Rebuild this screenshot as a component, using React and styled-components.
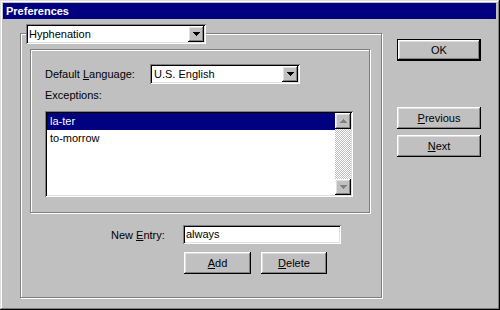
import React from "react";
import styled, { createGlobalStyle, css } from "styled-components";

const GlobalStyle = createGlobalStyle`
  html, body {
    margin: 0;
    padding: 0;
    background: #c0c0c0;
  }
  body {
    font-family: "Liberation Sans", Arial, sans-serif;
    font-size: 11px;
    color: #000;
  }
`;

// shared bevels
const raised = css`
  background: #c0c0c0;
  box-shadow: inset -1px -1px #000, inset 1px 1px #fff, inset -2px -2px #808080,
    inset 2px 2px #dfdfdf;
`;

const sunken = css`
  background: #fff;
  box-shadow: inset 1px 1px #808080, inset -1px -1px #fff, inset 2px 2px #000,
    inset -2px -2px #dfdfdf;
`;

const etched = css`
  border: 1px solid #808080;
  box-shadow: 1px 1px 0 #fff, inset 1px 1px 0 #fff;
`;

const Window = styled.div`
  box-sizing: border-box;
  width: 500px;
  height: 310px;
  padding: 3px 4px 3px 3px;
  background: #c0c0c0;
  box-shadow: inset -1px -1px #000, inset 1px 1px #dfdfdf, inset -2px -2px #808080,
    inset 2px 2px #fff;
  display: flex;
  flex-direction: column;
  overflow: hidden;
`;

const TitleBar = styled.div`
  height: 16px;
  background: #000080;
  color: #fff;
  font-weight: bold;
  font-size: 11px;
  line-height: 16px;
  padding-left: 3px;
`;

const Body = styled.div`
  display: flex;
  align-items: flex-start;
`;

const GroupBox = styled.div`
  ${etched};
  box-sizing: border-box;
  width: 362px;
  height: 265px;
  margin: 14px 0 0 17px;
`;

// combo box
const ComboField = styled.div`
  ${sunken};
  box-sizing: border-box;
  width: ${(p) => p.$width}px;
  height: 20px;
  padding: 2px;
  display: flex;
  align-items: center;
  margin: ${(p) => p.$margin || "0"};
`;

const ComboText = styled.span`
  flex: 1;
  padding-left: ${(p) => p.$indent || 1}px;
  white-space: nowrap;
`;

const ArrowButton = styled.div`
  ${raised};
  width: 16px;
  height: 16px;
  flex: none;
  display: flex;
  align-items: center;
  justify-content: center;
`;

const DownArrow = ({ color = "#000" }) => (
  <svg width="7" height="4" viewBox="0 0 7 4" shapeRendering="crispEdges">
    <path
      d="M0 0h7v1h-1v1h-1v1h-1v1h-1v-1h-1v-1h-1v-1h-1z"
      fill={color}
    />
  </svg>
);

const UpArrow = ({ color = "#000" }) => (
  <svg width="7" height="4" viewBox="0 0 7 4" shapeRendering="crispEdges">
    <path
      d="M0 4h7v-1h-1v-1h-1v-1h-1v-1h-1v1h-1v1h-1v1h-1z"
      fill={color}
    />
  </svg>
);

const Combo = ({ value, width, margin, indent }) => (
  <ComboField $width={width} $margin={margin}>
    <ComboText $indent={indent}>{value}</ComboText>
    <ArrowButton>
      <DownArrow />
    </ArrowButton>
  </ComboField>
);

const InnerPanel = styled.div`
  ${etched};
  box-sizing: border-box;
  width: 340px;
  height: 164px;
  margin: 5px 0 0 9px;
  padding: 14px 16px 0 14px;
`;

const LangRow = styled.div`
  display: flex;
  align-items: center;
  height: 20px;
`;

const Label = styled.span`
  display: inline-block;
  width: ${(p) => p.$width}px;
  flex: none;
  white-space: nowrap;
`;

const BlockLabel = styled.div`
  margin-top: 5px;
  line-height: 13px;
`;

const ListBox = styled.div`
  ${sunken};
  box-sizing: border-box;
  width: 308px;
  height: 86px;
  margin-top: 9px;
  padding: 2px;
  display: flex;
`;

const Items = styled.div`
  flex: 1;
`;

const Item = styled.div`
  height: 17px;
  line-height: 17px;
  padding-left: 3px;
  background: ${(p) => (p.$selected ? "#000080" : "transparent")};
  color: ${(p) => (p.$selected ? "#fff" : "#000")};
`;

const ScrollBar = styled.div`
  width: 16px;
  display: flex;
  flex-direction: column;
`;

const ScrollTrack = styled.div`
  flex: 1;
  background: repeating-conic-gradient(#c0c0c0 0 25%, #fff 0 50%) 0 0 / 2px 2px;
`;

const EntryRow = styled.div`
  display: flex;
  align-items: center;
  margin-top: 12px;
  padding-left: 90px;
`;

const TextInput = styled.div`
  ${sunken};
  box-sizing: border-box;
  width: 158px;
  height: 19px;
  line-height: 19px;
  padding-left: 3px;
`;

const ButtonRow = styled.div`
  display: flex;
  gap: 10px;
  margin-top: 8px;
  padding-left: 163px;
`;

const Button = styled.div`
  ${raised};
  box-sizing: border-box;
  width: ${(p) => p.$width}px;
  height: 22px;
  margin-top: ${(p) => p.$top || 0}px;
  display: flex;
  align-items: center;
  justify-content: center;
  ${(p) =>
    p.$default &&
    css`
      border: 1px solid #000;
    `}
`;

const SideColumn = styled.div`
  display: flex;
  flex-direction: column;
  margin: 20px 0 0 15px;
`;

const items = [
  { text: "la-ter", selected: true },
  { text: "to-morrow", selected: false },
];

export default function App() {
  return (
    <>
      <GlobalStyle />
      <Window>
        <TitleBar>Preferences</TitleBar>
        <Body>
          <GroupBox>
            <Combo value="Hyphenation" width={180} margin="-10px 0 0 5px" />
            <InnerPanel>
              <LangRow>
                <Label $width={105}>
                  Default <u>L</u>anguage:
                </Label>
                <Combo value="U.S. English" width={150} indent={2} />
              </LangRow>
              <BlockLabel>Exceptions:</BlockLabel>
              <ListBox>
                <Items>
                  {items.map((it) => (
                    <Item key={it.text} $selected={it.selected}>
                      {it.text}
                    </Item>
                  ))}
                </Items>
                <ScrollBar>
                  <ArrowButton>
                    <UpArrow color="#808080" />
                  </ArrowButton>
                  <ScrollTrack />
                  <ArrowButton>
                    <DownArrow color="#808080" />
                  </ArrowButton>
                </ScrollBar>
              </ListBox>
            </InnerPanel>
            <EntryRow>
              <Label $width={72}>
                New <u>E</u>ntry:
              </Label>
              <TextInput>always</TextInput>
            </EntryRow>
            <ButtonRow>
              <Button $width={67}>
                <u>A</u>dd
              </Button>
              <Button $width={66}>
                <u>D</u>elete
              </Button>
            </ButtonRow>
          </GroupBox>
          <SideColumn>
            <Button $width={84} $default>
              OK
            </Button>
            <Button $width={84} $top={46}>
              <u>P</u>revious
            </Button>
            <Button $width={84} $top={6}>
              <u>N</u>ext
            </Button>
          </SideColumn>
        </Body>
      </Window>
    </>
  );
}
